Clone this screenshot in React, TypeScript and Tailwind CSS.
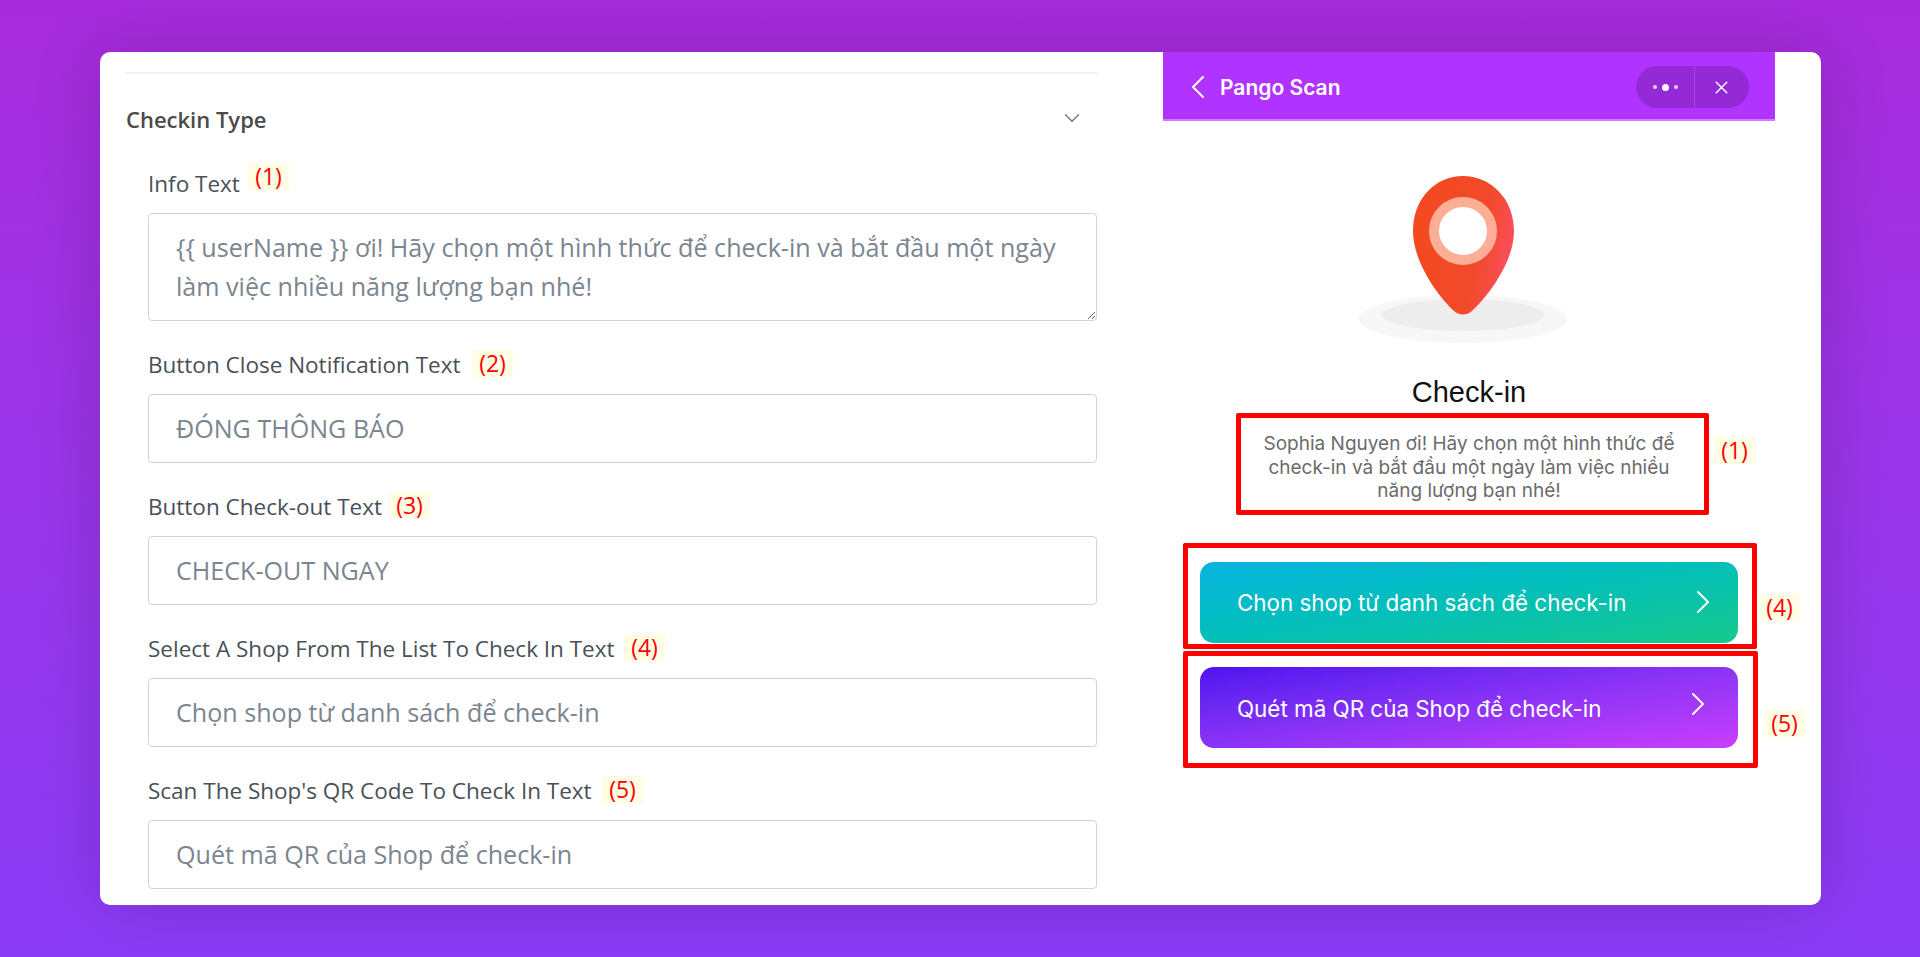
import { ChevronDown, ChevronLeft, ChevronRight, X } from 'lucide-react';

const Tag = ({ n, className }: { n: number; className: string }) => (
  <span className={`absolute flex h-[27px] w-[41px] items-center justify-center bg-[#fffde3] font-['Open_Sans',sans-serif] text-[23px] leading-none text-[#ff0000] ${className}`}>
    ({n})
  </span>
);

const fields = [
  { label: 'Button Close Notification Text', value: 'ĐÓNG THÔNG BÁO', n: 2, tag: 'left-[324px] -top-[1px]' },
  { label: 'Button Check-out Text', value: 'CHECK-OUT NGAY', n: 3, tag: 'left-[241px] -top-[1px]' },
  { label: 'Select A Shop From The List To Check In Text', value: 'Chọn shop từ danh sách để check-in', n: 4, tag: 'left-[476px] -top-[1px]' },
  { label: "Scan The Shop's QR Code To Check In Text", value: 'Quét mã QR của Shop để check-in', n: 5, tag: 'left-[454px] -top-[1px]' },
];

const App = () => {
  return (
    <div className="h-[957px] overflow-hidden bg-gradient-to-b from-[#a72bdc] to-[#8a3bf6] pl-[100px] pr-[99px] pt-[52px]">
      <div className="relative flex h-[853px] overflow-hidden rounded-[10px] bg-white shadow-[0_0_70px_rgba(0,0,0,0.16)]">
        {/* Settings form */}
        <div className="w-[997px] shrink-0 pl-[26px] font-['Open_Sans',sans-serif]">
          <div className="mt-[20px] border-t-2 border-[#f1f1f5]" />
          <div className="mt-[30px] flex items-center justify-between pr-[12px]">
            <h3 className="text-[22px] font-semibold leading-[30px] text-[#4a4a4a]">Checkin Type</h3>
            <ChevronDown className="mb-[2px] h-[26px] w-[26px] text-[#6b7280]" strokeWidth={1.2} />
          </div>

          <div className="pl-[22px]">
            <div className="relative mt-[36px]">
              <label className="block text-[22.5px] leading-[28px] text-[#495057]">Info Text</label>
              <Tag n={1} className="left-[100px] -top-[7px]" />
              <textarea
                className="mt-[15px] block h-[108px] w-full rounded-[4px] border border-[#ced4da] px-[27px] py-[14px] text-[25.1px] leading-[39px] placeholder:text-[#7b8590]"
                placeholder="{{ userName }} ơi! Hãy chọn một hình thức để check-in và bắt đầu một ngày làm việc nhiều năng lượng bạn nhé!"
              />
            </div>

            {fields.map((f) => (
              <div key={f.n} className="relative mt-[30px]">
                <label className="block text-[22.5px] leading-[28px] text-[#495057]">{f.label}</label>
                <Tag n={f.n} className={f.tag} />
                <input
                  className="mt-[15px] block h-[69px] w-full rounded-[4px] border border-[#ced4da] px-[27px] pb-[2px] text-[25.1px] placeholder:text-[#7b8590]"
                  placeholder={f.value}
                />
              </div>
            ))}
          </div>
        </div>

        {/* Phone preview */}
        <div className="ml-[66px] flex w-[612px] shrink-0 flex-col items-center font-['Liberation_Sans',sans-serif]">
          <div className="flex h-[69px] w-full items-center justify-between border-b-2 border-[#d27dff] bg-[#b133ff] pl-[15px] pr-[26px] pt-[3px]">
            <div className="flex items-center gap-[2px] text-white">
              <ChevronLeft className="h-[40px] w-[40px]" strokeWidth={1.2} />
              <span className="mt-[2px] font-['Inter',sans-serif] text-[21px] font-semibold">Pango Scan</span>
            </div>
            <div className="flex h-[42px] w-[113px] rounded-full bg-[#9429d6] text-white">
              <div className="flex w-[59px] items-center justify-center gap-[5px] border-r border-[#a83fe6]">
                <span className="h-[4px] w-[4px] rounded-full bg-[#ecd0fb]" />
                <span className="h-[7px] w-[7px] rounded-full bg-white" />
                <span className="h-[4px] w-[4px] rounded-full bg-[#ecd0fb]" />
              </div>
              <div className="flex flex-1 items-center justify-center pr-[2px]">
                <X className="h-[21px] w-[21px]" strokeWidth={1.7} />
              </div>
            </div>
          </div>

          <svg className="mr-[12px] mt-[55px]" width="210" height="168" viewBox="0 0 210 168" fill="none">
            <defs>
              <linearGradient id="pin" x1="0" y1="0" x2="1" y2="0.3">
                <stop offset="0" stopColor="#f4491f" />
                <stop offset="0.75" stopColor="#f14a2a" />
                <stop offset="1" stopColor="#fb4d55" />
              </linearGradient>
            </defs>
            <ellipse cx="105" cy="143" rx="104" ry="24" fill="#f7f7f7" />
            <ellipse cx="105" cy="139" rx="81" ry="16" fill="#ededed" />
            <path
              d="M105 0C132 0 156 22 156 55C156 88 127 123 115 134C109 140 101 140 95 134C83 123 55 88 55 55C55 22 78 0 105 0Z"
              fill="url(#pin)"
            />
            <circle cx="105" cy="55" r="29" fill="#fff" stroke="#fdae96" strokeWidth="10" />
          </svg>

          <h2 className="mt-[31px] text-[29px] leading-[34px] text-[#111111]">Check-in</h2>
          <p className="mt-[23px] w-[440px] text-center font-['Inter',sans-serif] text-[19px] leading-[23.5px] text-[#6b6b6b]">
            Sophia Nguyen ơi! Hãy chọn một hình thức để check-in và bắt đầu một ngày làm việc nhiều năng lượng bạn nhé!
          </p>

          <div className="mt-[59px] flex w-[538px] flex-col gap-[24px] font-['Inter',sans-serif] text-[22.4px] text-white">
            <div className="flex h-[81px] items-center justify-between rounded-[14px] bg-gradient-to-br from-[#0bb3df] to-[#17c98a] pl-[37px] pr-[15px]">
              <span className="pt-[2px]">Chọn shop từ danh sách để check-in</span>
              <ChevronRight className="h-[40px] w-[40px]" strokeWidth={1.2} />
            </div>
            <div className="flex h-[81px] items-center justify-between rounded-[14px] bg-gradient-to-br from-[#4f10ee] to-[#ca3cfd] pl-[37px] pr-[20px]">
              <span className="pt-[3px]">Quét mã QR của Shop để check-in</span>
              <ChevronRight className="mb-[6px] h-[40px] w-[40px]" strokeWidth={1.2} />
            </div>
          </div>
        </div>

        {/* Red annotation boxes over the preview */}
        <div className="absolute left-[1136px] top-[361px] h-[102px] w-[473px] rounded-[2px] border-[5px] border-[#ff0000]" />
        <div className="absolute left-[1083px] top-[491px] h-[106px] w-[574px] rounded-[2px] border-[5px] border-[#ff0000]" />
        <div className="absolute left-[1083px] top-[599px] h-[117px] w-[575px] rounded-[2px] border-[5px] border-[#ff0000]" />
        <Tag n={1} className="left-[1614px] top-[385px]" />
        <Tag n={4} className="left-[1659px] top-[542px]" />
        <Tag n={5} className="left-[1664px] top-[658px]" />
      </div>
    </div>
  );
};

export default App;
